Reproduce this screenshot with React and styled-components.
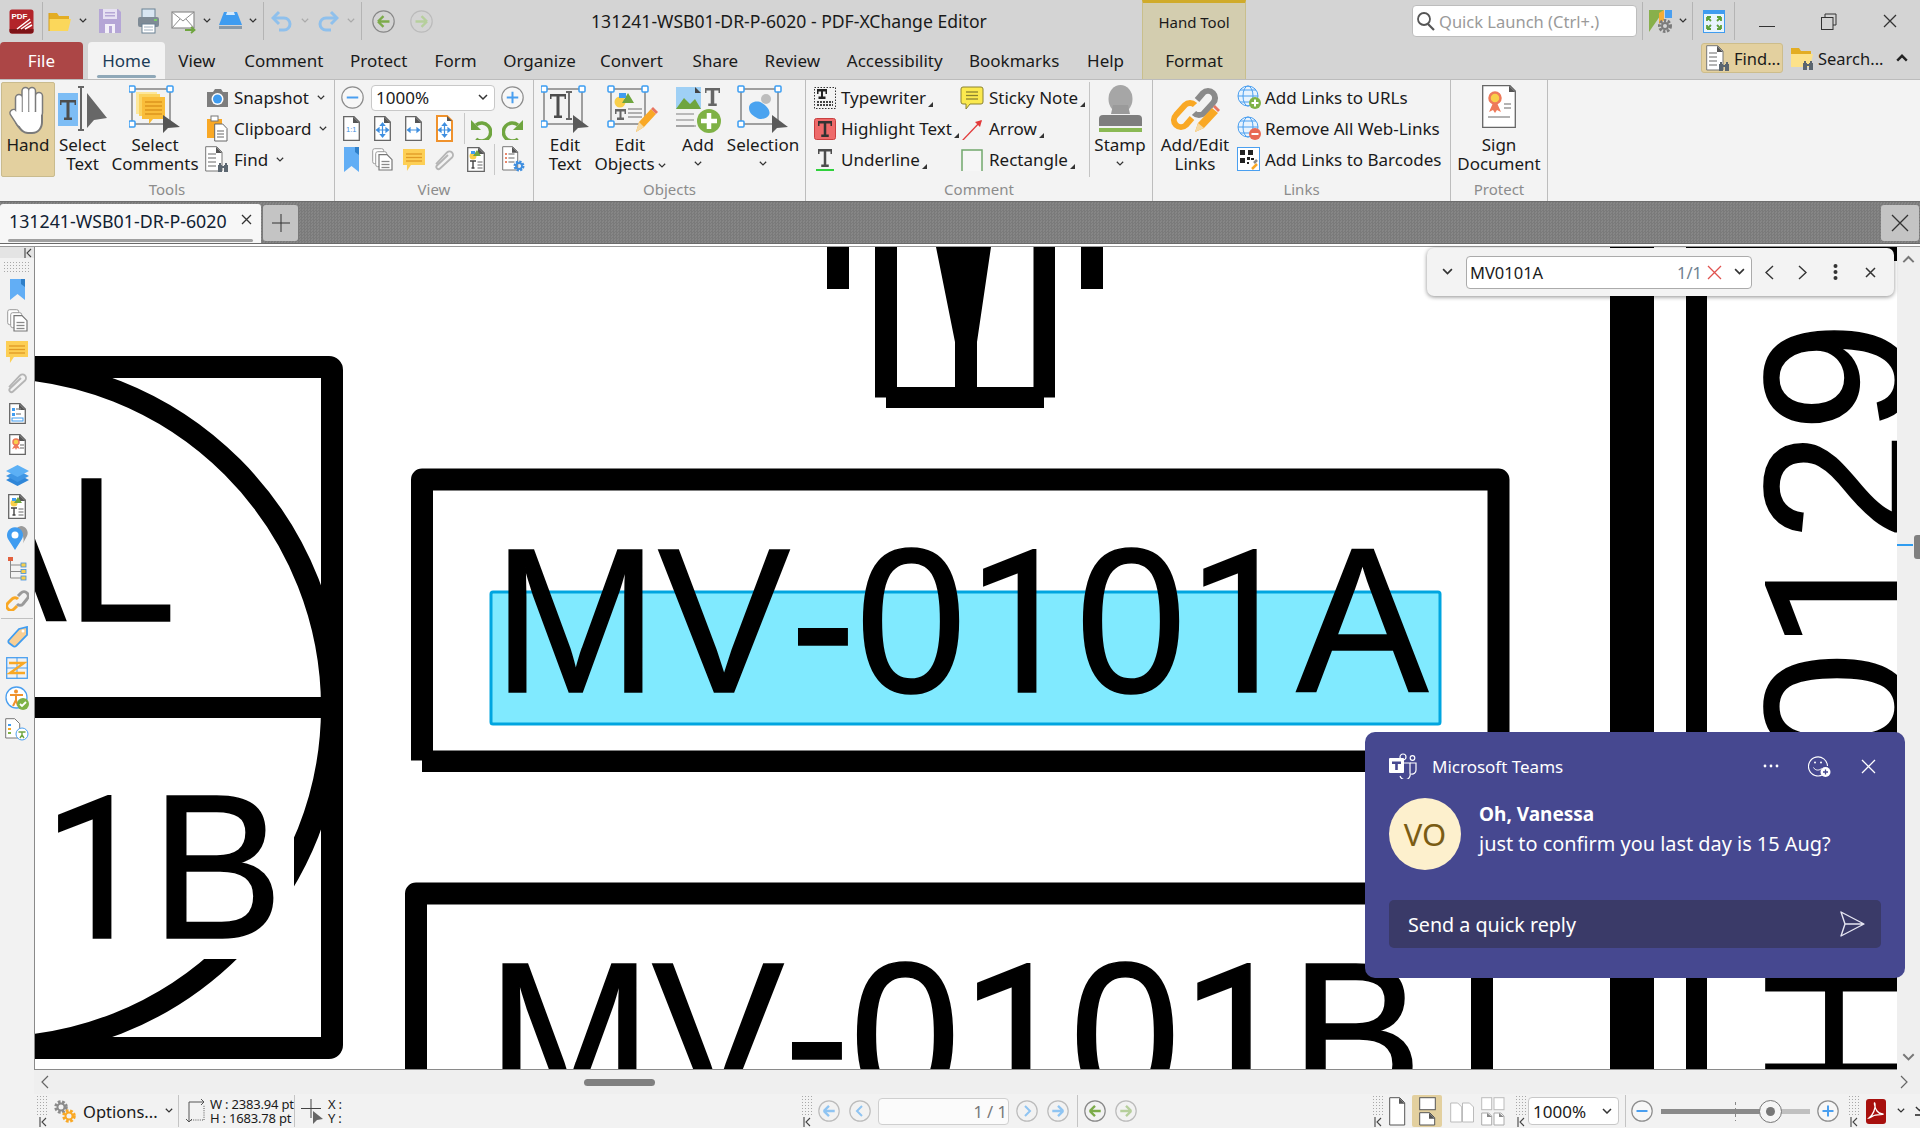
import styled, { createGlobalStyle } from "styled-components";

const GlobalStyle = createGlobalStyle`
  html, body { margin: 0; padding: 0; background: #f2f2f2; }
  * { box-sizing: border-box; }
`;

/* ---------- small drawing helpers ---------- */

const Svg = styled.svg`
  display: block;
  flex: none;
`;

const Ico = ({ w = 24, h = w, children }) => (
  <Svg width={w} height={h} viewBox={`0 0 ${w} ${h}`}>
    {children}
  </Svg>
);

const Chev = ({ s = 9, c = "#333", up, sw = 1.5 }) => (
  <Svg width={s} height={s * 0.65} viewBox="0 0 10 6.5">
    <polyline
      points={up ? "1,5.5 5,1.5 9,5.5" : "1,1 5,5 9,1"}
      fill="none"
      stroke={c}
      strokeWidth={sw}
    />
  </Svg>
);

const Cross = ({ s = 14, c = "#333", sw = 1.3 }) => (
  <Ico w={s}>
    <path d={`M1 1L${s - 1} ${s - 1}M${s - 1} 1L1 ${s - 1}`} stroke={c} strokeWidth={sw} />
  </Ico>
);

const Doc = ({ w = 18, h = 24, children, stroke = "#666" }) => (
  <Ico w={w} h={h}>
    <path d={`M.7.7H${w - 6}L${w - 0.7} 6V${h - 0.7}H.7z`} fill="#fff" stroke={stroke} strokeWidth="1.3" />
    <path d={`M${w - 7} .7L${w - 0.7} 7H${w - 7}z`} fill="#555" />
    {children}
  </Ico>
);

const Lines = ({ x, y, w, n = 3, gap = 4, c = "#8a8a8a" }) => (
  <g stroke={c} strokeWidth="1.3">
    {Array.from({ length: n }).map((_, i) => (
      <line key={i} x1={x} x2={x + w} y1={y + i * gap} y2={y + i * gap} />
    ))}
  </g>
);

const Bino = ({ x, y }) => (
  <g fill="#5b6670">
    <rect x={x} y={y + 2} width="4" height="7" />
    <rect x={x + 6} y={y + 2} width="4" height="7" />
    <rect x={x + 1} y={y} width="2" height="3" />
    <rect x={x + 7} y={y} width="2" height="3" />
    <rect x={x + 3} y={y + 3} width="4" height="2" />
  </g>
);

const Handles = ({ x, y, w, h }) => (
  <g>
    <rect x={x} y={y} width={w} height={h} fill="none" stroke="#8a8a8a" strokeWidth="1.600" />
    {[[x, y], [x + w, y], [x, y + h]].map(([a, b], i) => (
      <rect key={i} x={a - 3} y={b - 3} width="6" height="6" rx="1" fill="#fff" stroke="#3b9df2" strokeWidth="1.500" />
    ))}
  </g>
);

const BigT = ({ x, y, w = 16, h = 20, c = "#4d4d4d", s = 3 }) => (
  <path
    fill={c}
    d={`M${x} ${y}h${w}v5h-1.500v-2.500h-${w / 2 - 1.5 - s / 2}v${h - 5}h2.500v2.500h-${s + 5}v-2.500h2.500v-${h - 5}h-${w / 2 - 1.5 - s / 2}v2.500h-1.500z`}
  />
);

const CircleBtn = ({ s = 23, c = "#aaa", bg = "none", children }) => (
  <Ico w={s}>
    <circle cx={s / 2} cy={s / 2} r={s / 2 - 0.8} fill={bg} stroke={c} strokeWidth="1.2" />
    {children}
  </Ico>
);

const NavArrow = ({ s = 23, dir = "left", c = "#7cab4a", ring = "#888" }) => (
  <CircleBtn s={s} c={ring}>
    <path
      transform={dir === "left" ? "" : `rotate(180 ${s / 2} ${s / 2})`}
      d={`M${s * 0.26} ${s / 2}L${s / 2} ${s * 0.27}M${s * 0.26} ${s / 2}L${s / 2} ${s * 0.73}M${s * 0.28} ${s / 2}H${s * 0.76}`}
      fill="none"
      stroke={c}
      strokeWidth="2.400"
    />
  </CircleBtn>
);

const PlusMinus = ({ plus, s = 23 }) => (
  <CircleBtn s={s} c="#8d8d8d" bg="#f7f7f7">
    <path
      d={`M${s * 0.25} ${s / 2}H${s * 0.75}${plus ? `M${s / 2} ${s * 0.25}V${s * 0.75}` : ""}`}
      stroke="#4a9ff0"
      strokeWidth="2"
    />
  </CircleBtn>
);

const Grip = styled.span`
  display: block;
  flex: none;
  width: ${(p) => p.$w || 13}px;
  height: ${(p) => p.$h || 20}px;
  background-image: radial-gradient(#a8a8a8 0.7px, transparent 0.8px);
  background-size: 3px 3px;
`;

const Collapse = () => (
  <Ico w={8} h={10}>
    <path d="M1 0V10M7 1L3 5L7 9" fill="none" stroke="#444" strokeWidth="1.1" />
  </Ico>
);

/* ---------- icons ---------- */

const AppLogo = () => (
  <Ico w={25}>
    <rect x=".5" y=".5" width="24" height="24" rx="2.500" fill="#b3242a" />
    <path d="M.5 20h24v2a2.500 2.500 0 0 1-2.500 2.500h-19a2.500 2.500 0 0 1-2.500-2.500z" fill="#7d1317" />
    <text x="2.500" y="9.500" fontSize="8" fontWeight="700" fill="#fff" fontFamily="Liberation Sans, sans-serif">PDF</text>
    <path d="M8 20L21 10M12 20L22 13M16 20L23 16" stroke="#fff" strokeWidth="1.500" />
  </Ico>
);

const Folder = () => (
  <Ico w={24} h={22}>
    <path d="M1 3h8l2 3h10v4H1z" fill="#e3ad23" />
    <path d="M1 21V9h22l-3 12z" fill="#fbd75b" />
    <path d="M1 21L1 3" stroke="#d59e1d" />
  </Ico>
);

const Save = ({ w = 22 }) => (
  <Ico w={w} h={26}>
    <path d="M0 1h19l3 3v21H0z" fill="#b5a6d6" />
    <rect x="4" y="1" width="14" height="10" fill="#e7e1f3" />
    <rect x="6" y="4" width="10" height="1.500" fill="#b5a6d6" />
    <rect x="6" y="7" width="10" height="1.500" fill="#b5a6d6" />
    <rect x="6" y="16" width="10" height="9" fill="#f3f0f9" />
    <rect x="10" y="18" width="3" height="7" fill="#b5a6d6" />
  </Ico>
);

const Printer = () => (
  <Ico w={23} h={26}>
    <rect x="5" y="1" width="13" height="9" fill="#d9e6f2" stroke="#6a8194" />
    <rect x="1" y="9" width="21" height="10" rx="2" fill="#7f8b96" />
    <rect x="17" y="11" width="3" height="2" fill="#7bd06a" />
    <rect x="5" y="16" width="13" height="9" fill="#fff" stroke="#6a8194" />
    <path d="M7 19h9M7 22h9" stroke="#9fb0bf" />
  </Ico>
);

const Mail = () => (
  <Ico w={26} h={26}>
    <rect x="1" y="4" width="22" height="16" fill="#fff" stroke="#8e8e8e" strokeWidth="1.200" />
    <path d="M1 4l11 9 11-9M1 20l8-9M23 20l-8-9" fill="none" stroke="#8e8e8e" />
    <path d="M14 22h9M20 19l3.500 3-3.500 3" fill="none" stroke="#6fa53f" strokeWidth="1.800" />
  </Ico>
);

const Scanner = () => (
  <Ico w={25} h={22}>
    <path d="M6 2h13l5 13H1z" fill="#3f9cf0" />
    <path d="M9 2h7l1 3H8z" fill="#d5eafc" />
    <rect x="1" y="16" width="23" height="3" fill="#8a9aa8" />
  </Ico>
);

const UndoIcon = ({ flip, o = 1 }) => (
  <Ico w={21} h={22}>
    <g transform={flip ? "translate(21 0) scale(-1 1)" : ""} opacity={o}>
      <path d="M3 8h10a6 6 0 0 1 0 12H8" fill="none" stroke="#8fc0ec" strokeWidth="3" />
      <path d="M8 2L2 8l6 6" fill="none" stroke="#8fc0ec" strokeWidth="3" />
    </g>
  </Ico>
);

const FolderBino = () => (
  <Ico w={24} h={26}>
    <path d="M1 3h8l2 3h10v5H1z" fill="#e3ad23" />
    <path d="M1 22V9h22l-3 13z" fill="#fde28a" />
    <Bino x={13} y={16} />
  </Ico>
);

const FindDoc = () => (
  <Ico w={24} h={27}>
    <path d="M.7.7h11L17 6v19H.7z" fill="#fff" stroke="#777" />
    <path d="M11 .7L17 7h-6z" fill="#555" />
    <Lines x={3} y={8} w={8} n={4} gap={4} />
    <Bino x={13} y={17} />
  </Ico>
);

const GearBadge = () => (
  <Ico w={25} h={25}>
    <path d="M1 1h15l-6 9-9 13z" fill="#88b04b" />
    <path d="M17 1h7v8h-7z" fill="#4a9ff0" />
    <path d="M11 4l5-3v10l-5 4z" fill="#f6ad35" />
    <circle cx="17" cy="17" r="5.500" fill="none" stroke="#7b7b7b" strokeWidth="3" strokeDasharray="2.500 1.500" />
    <circle cx="17" cy="17" r="3" fill="none" stroke="#7b7b7b" strokeWidth="2" />
  </Ico>
);

const FullScreen = () => (
  <Ico w={22} h={23}>
    <rect x=".5" y=".5" width="21" height="22" fill="#e8f4fd" stroke="#3f9cf0" />
    <rect x="0" y="0" width="22" height="4" fill="#3f9cf0" />
    <path d="M4 7l4 4M4 7h4M4 7v4M18 7l-4 4M18 7h-4M18 7v4M4 19l4-4M4 19h4M4 19v-4M18 19l-4-4M18 19h-4M18 19v-4" stroke="#5fa03a" strokeWidth="1.800" fill="none" />
  </Ico>
);

const HandIcon = () => (
  <Ico w={38} h={50}>
    <g fill="none" strokeLinecap="round" stroke="#7b7b7b" strokeWidth="8.500">
      <path d="M10 28V13M16.500 26V6M23 26V6M30 28V11M4.500 28L11 38" />
    </g>
    <path d="M6 27h28v10c0 6-4 12-11 12h-4c-5 0-9-4-13-11z" fill="#7b7b7b" />
    <g fill="none" strokeLinecap="round" stroke="#fff" strokeWidth="5.500">
      <path d="M10 28V13M16.500 26V6M23 26V6M30 28V11M4.500 28L11 38" />
    </g>
    <path d="M8 27h24v10c0 5-3 10-9 10h-4c-4 0-7-3-10-9z" fill="#fff" />
  </Ico>
);

const SelectText = () => (
  <Ico w={50} h={48}>
    <rect x="0" y="8" width="20" height="33" fill="#7dbdf5" />
    <BigT x={2} y={15} w={16} h={20} />
    <path d="M23 2v43M20 2h6M20 45h6" stroke="#666" strokeWidth="2" />
    <path d="M29 8V43L36 35L49 33z" fill="#676767" />
  </Ico>
);

const SelectComments = () => (
  <Ico w={52} h={48}>
    <Handles x={3} y={4} w={38} h={35} />
    <rect x="7" y="7" width="21" height="22" fill="#fde79a" />
    <rect x="10" y="9" width="21" height="22" fill="#fbd35f" />
    <path d="M13 12h23v22H24l-4 5v-5h-7z" fill="#f9bd3a" />
    <Lines x={16} y={17} w={17} n={4} gap={4} c="#d98f1a" />
    <path d="M34 30V48L39 43L51 42z" fill="#555" />
  </Ico>
);

const Camera = () => (
  <Ico w={23} h={20}>
    <path d="M1 4h6l2-3h6l2 3h5v15H1z" fill="#7d7d7d" />
    <circle cx="11.500" cy="11" r="6" fill="#fff" />
    <circle cx="11.500" cy="11" r="4.500" fill="#3f9cf0" />
  </Ico>
);

const Clipboard = () => (
  <Ico w={22} h={27}>
    <rect x="1" y="4" width="15" height="19" fill="#f9a825" />
    <rect x="5" y="1" width="7" height="5" fill="#fff" stroke="#777" />
    <path d="M8.700 9h8L21 13.500V26H8.700z" fill="#fff" stroke="#666" />
    <Lines x={11} y={16} w={7} n={3} gap={3} />
  </Ico>
);

const Doc11 = () => (
  <Doc w={17} h={25}>
    <text x="3" y="16" fontSize="7.500" fill="#3f8fe0" fontFamily="Liberation Sans, sans-serif">1:1</text>
  </Doc>
);

const Arrows4 = ({ x, y, v = true, h = true }) => (
  <g stroke="#3f8fe0" strokeWidth="1.200" fill="#3f8fe0">
    {h && <path d={`M${x - 6} ${y}h12M${x - 6} ${y}l2.500-2v4zM${x + 6} ${y}l-2.500-2v4z`} />}
    {v && <path d={`M${x} ${y - 7}v14M${x} ${y - 7}l-2 2.500h4zM${x} ${y + 7}l-2-2.500h4z`} />}
  </g>
);

const DocFit = () => (
  <Doc w={17} h={25}>
    <Arrows4 x={8.500} y={14} />
  </Doc>
);

const DocWidth = () => (
  <Doc w={17} h={25}>
    <Arrows4 x={8.500} y={14} v={false} />
  </Doc>
);

const DocVisible = () => (
  <Ico w={17} h={27}>
    <path d="M1 1h10l5 5v20H1z" fill="#fff" stroke="#f0922c" strokeWidth="2" />
    <path d="M11 1l5 5h-5z" fill="#555" />
    <Arrows4 x={8.500} y={15} />
  </Ico>
);

const Rotate = ({ flip }) => (
  <Ico w={22}>
    <g transform={flip ? "translate(22 0) scale(-1 1)" : ""}>
      <path d="M6 21A9 9 0 1 0 6 7" fill="none" stroke="#6fa53f" strokeWidth="3.500" />
      <path d="M1 2v10h10z" fill="#6fa53f" />
    </g>
  </Ico>
);

const Bookmark = ({ w = 15, h = 25 }) => (
  <Ico w={w} h={h}>
    <path d={`M0 0H${w}V${h}L${w / 2} ${h - 6}L0 ${h}z`} fill="#62aef5" />
    <path d={`M${w - 4} 0H${w}V8L${w - 4} 5z`} fill="#2f7fc8" />
  </Ico>
);

const Pages = () => (
  <Ico w={21} h={23}>
    <rect x=".7" y=".7" width="11" height="15" rx="2" fill="#fff" stroke="#9a9a9a" />
    <rect x="3.700" y="3.700" width="11" height="15" rx="2" fill="#fff" stroke="#9a9a9a" />
    <path d="M7 6.700h8l5 5V22H7z" fill="#fff" stroke="#777" strokeWidth="1.200" />
    <Lines x={9.500} y={13.500} w={8} n={3} gap={3} />
  </Ico>
);

const Note = ({ w = 22, h = 22 }) => (
  <Ico w={w} h={h}>
    <path d={`M0 0H${w}V${h - 6}H${w * 0.36}L${w * 0.18} ${h}V${h - 6}H0z`} fill="#fdcf55" />
    <Lines x={3} y={5} w={w - 6} n={3} gap={3.500} c="#e09a25" />
  </Ico>
);

const Clip = () => (
  <Ico w={23}>
    <path d="M4 16L15 4.500a3.500 3.500 0 0 1 5 5L8 20.500a2 2 0 0 1-3-3L16 7" fill="none" stroke="#b5b5b5" strokeWidth="1.800" transform="translate(-1 0)" />
  </Ico>
);

const DocShapes = () => (
  <Doc w={18} h={25}>
    <circle cx="6" cy="9" r="3.500" fill="#f9cf4a" />
    <path d="M6 9l4-6 4 6z" fill="#6fa53f" />
    <rect x="4" y="4" width="4" height="3" fill="#3f9cf0" />
    <path d="M3 14h6M6 14v7M4.500 21h3" stroke="#444" strokeWidth="1.400" />
    <Lines x={10.500} y={15} w={5} n={3} gap={3} />
  </Doc>
);

const DocListGear = () => (
  <Ico w={24} h={27}>
    <path d="M.7.7h10l5 5V24H.7z" fill="#fff" stroke="#777" />
    <path d="M10 .7l6 6h-6z" fill="#555" />
    <path d="M3 8h2M3 12h2M3 16h2" stroke="#e2603d" strokeWidth="1.500" />
    <Lines x={6.500} y={8} w={6} n={3} gap={4} />
    <circle cx="17" cy="20" r="4" fill="none" stroke="#3f8fe0" strokeWidth="3" strokeDasharray="2 1.100" />
    <circle cx="17" cy="20" r="3" fill="none" stroke="#3f8fe0" strokeWidth="1.800" />
  </Ico>
);

const EditText = () => (
  <Ico w={48} h={48}>
    <Handles x={3} y={4} w={38} h={35} />
    <BigT x={9} y={9} w={16} h={24} s={3} />
    <path d="M28 7v27M25 7h6M25 34h6" stroke="#666" strokeWidth="1.800" />
    <path d="M32 30V48L37 43L48 42z" fill="#5a5a5a" />
  </Ico>
);

const EditObjects = () => (
  <Ico w={56} h={48}>
    <Handles x={9} y={4} w={34} h={35} />
    <circle cx="18" cy="17" r="5.500" fill="#f9cf4a" />
    <path d="M20 18l6-10 6 10z" fill="#6fa53f" />
    <rect x="17" y="8" width="7" height="5" fill="#3f9cf0" />
    <BigT x={13} y={24} w={11} h={11} c="#666" s={2} />
    <Lines x={26} y={24} w={14} n={3} gap={4} />
    <path d="M34 47l3-10 12-13 5 5-12 13z" fill="#f9a825" />
    <path d="M34 47l3-10 5 5z" fill="#f6d9a0" />
    <path d="M49 24l2-2 5 5-2 2z" fill="#e87461" />
  </Ico>
);

const AddIcon = () => (
  <Ico w={48} h={48}>
    <rect x="2" y="2" width="25" height="22" fill="#9fd0f5" />
    <path d="M2 24l8-11 6 6 5-5 6 10z" fill="#6fa53f" />
    <path d="M21 2l6 6h-6z" fill="#444" />
    <BigT x={31} y={3} w={15} h={18} c="#666" s={3.500} />
    <Lines x={2} y={29} w={18} n={3} gap={6} c="#999" />
    <path d="M2 41h20" stroke="#999" strokeWidth="1.300" />
    <circle cx="35" cy="36" r="12" fill="#7fb246" />
    <path d="M35 28v16M27 36h16" stroke="#fff" strokeWidth="4.500" />
  </Ico>
);

const SelectionIcon = () => (
  <Ico w={52} h={48}>
    <Handles x={4} y={4} w={37} h={35} />
    <path d="M12 23c0-6 8-8 13-5s9 8 7 12-9 5-12 3-8-4-8-10z" fill="#4aa3f0" />
    <circle cx="29" cy="14" r="5" fill="#bdbdbd" />
    <path d="M35 30V48L40 43L51 42z" fill="#5a5a5a" />
  </Ico>
);

const Typewriter = () => (
  <Ico w={22} h={24}>
    <rect x=".5" y="1.500" width="21" height="21" fill="none" stroke="#333" strokeDasharray="1.500 1.500" />
    <BigT x={3} y={3} w={10} h={10} c="#222" s={2} />
    <path d="M3 16h16M3 19h16" stroke="#444" strokeWidth="2" strokeDasharray="2 1" />
  </Ico>
);

const HighlightT = () => (
  <Ico w={22} h={22}>
    <rect x=".5" y=".5" width="21" height="21" rx="2" fill="#ee6a6a" stroke="#c94040" />
    <BigT x={4} y={3} w={14} h={16} c="#333" s={2.500} />
  </Ico>
);

const UnderlineT = () => (
  <Ico w={20} h={24}>
    <BigT x={3} y={1} w={14} h={18} c="#4d4d4d" s={2.500} />
    <rect x="1" y="21" width="18" height="2" fill="#2fd13c" />
  </Ico>
);

const Sticky = () => (
  <Ico w={24}>
    <path d="M3 1h18a2 2 0 0 1 2 2v13a2 2 0 0 1-2 2H10l-4 5v-5H3a2 2 0 0 1-2-2V3a2 2 0 0 1 2-2z" fill="#fbe94e" stroke="#8a8230" />
    <Lines x={6} y={6} w={12} n={3} gap={3.500} c="#8a8230" />
  </Ico>
);

const RedArrow = () => (
  <Ico w={22}>
    <path d="M1 23L20 3" stroke="#e23b3b" strokeWidth="1.300" />
    <path d="M21 2l-7 2 5 5z" fill="#e23b3b" />
  </Ico>
);

const GreenRect = () => (
  <Ico w={22}>
    <rect x="1" y="1" width="20" height="22" fill="#f6f6f6" stroke="#71a86c" strokeWidth="1.500" />
  </Ico>
);

const StampIcon = () => (
  <Ico w={45} h={48}>
    <ellipse cx="22.500" cy="14" rx="12" ry="14" fill="#a6a6a6" />
    <path d="M15 20h15l2 9H13z" fill="#9a9a9a" />
    <path d="M5 30h35a4 4 0 0 1 4 4v7H1v-7a4 4 0 0 1 4-4z" fill="#7e7e7e" />
    <rect x="1" y="43" width="43" height="4" fill="#8ab954" />
  </Ico>
);

const LinkPencil = () => (
  <Ico w={52} h={48}>
    <path d="M28 15l6-7a7 7 0 0 1 10 10l-9 10a7 7 0 0 1-10 0" fill="none" stroke="#8a8a8a" strokeWidth="6" />
    <path d="M26 20a7 7 0 0 0-10 0l-9 10a7 7 0 0 0 10 10l6-7" fill="none" stroke="#f9a825" strokeWidth="6" />
    <path d="M26 47l3-9 14-15 6 5-14 15z" fill="#f9a825" />
    <path d="M26 47l3-9 6 5z" fill="#f6d9a0" />
    <path d="M44 22l2-2 5 5-2 2z" fill="#e87461" />
  </Ico>
);

const Globe = ({ badge }) => (
  <Ico w={25}>
    <circle cx="11" cy="11" r="10" fill="#e8f3fd" stroke="#4a9ff0" />
    <ellipse cx="11" cy="11" rx="5" ry="10" fill="none" stroke="#4a9ff0" />
    <path d="M1 11h20M3 5h16M3 17h16" stroke="#4a9ff0" />
    <circle cx="18" cy="18" r="6" fill={badge === "plus" ? "#7fb246" : "#e86a55"} />
    <path d={badge === "plus" ? "M14.500 18h7M18 14.500v7" : "M14.500 18h7"} stroke="#fff" strokeWidth="2" />
  </Ico>
);

const QrLink = () => (
  <Ico w={24} h={25}>
    <rect x=".5" y=".5" width="22" height="23" fill="#fff" stroke="#4a9ff0" />
    <path d="M3 3h5v5H3zM11 3h5v5h-5zM3 11h5v5H3zM10 10h3v3h-3zM14 11h3v2h-3zM10 15h2v2h-2z" fill="#222" />
    <path d="M15 22l5-5" stroke="#f9a825" strokeWidth="2.500" />
    <path d="M17 16l3-3" stroke="#8a8a8a" strokeWidth="2.500" />
  </Ico>
);

const SignDoc = () => (
  <Doc w={34} h={43} stroke="#666">
    <circle cx="13" cy="13" r="5.500" fill="#f9cf4a" stroke="#ee7a5a" strokeWidth="2.500" />
    <path d="M7 27l4-9h4l4 9-4-2-2 3-2-3z" fill="#ee7a5a" />
    <Lines x={22} y={19} w={7} n={2} gap={4} />
    <Lines x={6} y={32} w={22} n={1} gap={4} />
  </Doc>
);

const DocList = () => (
  <Doc w={17} h={21}>
    <path d="M3 5h3v3H3zM3 10h3v3H3z" fill="#3f9cf0" />
    <Lines x={7} y={6} w={5} n={2} gap={5} />
    <rect x="3" y="15" width="11" height="3" fill="none" stroke="#3f9cf0" />
  </Doc>
);

const DocSeal = () => (
  <Doc w={17} h={21}>
    <circle cx="7" cy="8" r="3" fill="#f9cf4a" stroke="#ee7a5a" strokeWidth="1.500" />
    <path d="M3 15l3-5h2l3 5-3-1-1 2-1-2z" fill="#ee7a5a" />
    <Lines x={11} y={11} w={4} n={2} gap={3} />
  </Doc>
);

const Layers = () => (
  <Ico w={23} h={22}>
    <path d="M11.500 9L23 15l-11.500 6L0 15z" fill="#2f86d8" />
    <path d="M11.500 5L23 11l-11.500 6L0 11z" fill="#3f96e4" />
    <path d="M11.500 0L23 6l-11.500 6L0 6z" fill="#5cb0f5" />
  </Ico>
);

const Pins = () => (
  <Ico w={22} h={24}>
    <path d="M15 0a7 7 0 0 1 6 10l-5 9c4-6 0-14-6-16a7 7 0 0 1 5-3z" fill="#9a9a9a" />
    <path d="M9 24L2 13a8 8 0 1 1 14 0z" fill="#3f9cf0" />
    <circle cx="9" cy="9" r="3.500" fill="#fff" />
  </Ico>
);

const Tree = () => (
  <Ico w={20} h={24}>
    <rect x="1" y="0" width="5" height="4" fill="#e2603d" />
    <path d="M3.500 4V21M3.500 8H14M3.500 14.500H14M3.500 21H14" stroke="#888" />
    <rect x="14" y="6" width="5" height="4" fill="#f9cf4a" stroke="#3f8fe0" strokeWidth=".8" />
    <rect x="14" y="12.500" width="5" height="4" fill="#f9cf4a" stroke="#3f8fe0" strokeWidth=".8" />
    <rect x="14" y="19" width="5" height="4" fill="#f9cf4a" stroke="#3f8fe0" strokeWidth=".8" />
  </Ico>
);

const LinkSmall = () => (
  <Ico w={23}>
    <path d="M12 8l3-3a4 4 0 0 1 6 6l-4 5a4 4 0 0 1-6 0" fill="none" stroke="#9a9a9a" strokeWidth="3" />
    <path d="M12 11a4 4 0 0 0-6 0l-4 4a4 4 0 0 0 6 6l3-3" fill="none" stroke="#f9a825" strokeWidth="3" />
  </Ico>
);

const Tag = () => (
  <Ico w={21} h={22}>
    <path d="M2 14L12 3l8-2v8L9 20a2 2 0 0 1-3 0l-4-3a2 2 0 0 1 0-3z" fill="#f8cf95" stroke="#3f9cf0" strokeWidth="1.800" />
    <circle cx="16" cy="5" r="1.500" fill="#fff" />
  </Ico>
);

const Zigzag = () => (
  <Ico w={22}>
    <rect x=".7" y=".7" width="20.600" height="20.600" fill="none" stroke="#4a9ff0" strokeWidth="1.300" />
    <path d="M0 11h22M11 0v22" stroke="#4a9ff0" />
    <path d="M3 6h15L4 16h15" fill="none" stroke="#f9a825" strokeWidth="2.400" />
  </Ico>
);

const Access = () => (
  <Ico w={25}>
    <circle cx="11.500" cy="11.500" r="10.500" fill="#fff" stroke="#4a9ff0" strokeWidth="1.300" />
    <circle cx="11" cy="5.500" r="2" fill="#f0922c" />
    <path d="M5 9h13M11 9v5l-3 6M11 14l2 6" fill="none" stroke="#f0922c" strokeWidth="2" />
    <circle cx="18" cy="18" r="6" fill="#7fb246" />
    <path d="M15 18l2 2 4-4" fill="none" stroke="#fff" strokeWidth="1.800" />
  </Ico>
);

const ListAccess = () => (
  <Ico w={24} h={23}>
    <path d="M.7.7h9l5 5V20H.7z" fill="#fff" stroke="#777" />
    <path d="M3 6h3v2H3z" fill="#3f9cf0" />
    <path d="M3 10h3v2H3z" fill="#f9a825" />
    <path d="M3 14h3v2H3z" fill="#7fb246" />
    <circle cx="17" cy="16" r="6" fill="#fff" stroke="#4a9ff0" />
    <path d="M13.500 14h7M17 14v3l-2 3M17 17l2 3" fill="none" stroke="#6fa53f" strokeWidth="1.400" />
  </Ico>
);

const GearOrange = () => (
  <Ico w={24} h={24}>
    <circle cx="8" cy="8" r="5" fill="none" stroke="#8a8a8a" strokeWidth="3.500" strokeDasharray="2.500 1.500" />
    <circle cx="8" cy="8" r="3.500" fill="none" stroke="#8a8a8a" strokeWidth="2" />
    <circle cx="16" cy="17" r="5" fill="none" stroke="#f9a825" strokeWidth="3.500" strokeDasharray="2.500 1.500" />
    <circle cx="16" cy="17" r="3.500" fill="none" stroke="#f9a825" strokeWidth="2" />
  </Ico>
);

const SizeIcon = () => (
  <Ico w={20} h={25}>
    <path d="M3 3h15M15 0l3 3-3 3M3 3v20M0 20l3 3 3-3" fill="none" stroke="#555" />
    <path d="M5 21h13M18 21V6" stroke="#555" strokeDasharray="1 1.200" />
  </Ico>
);

const CrossPointer = () => (
  <Ico w={22} h={26}>
    <path d="M10 1v19M0 10.500h20" stroke="#444" />
    <path d="M12 13V26L16 22L22 21z" fill="#666" />
  </Ico>
);

const SinglePage = () => (
  <Ico w={17} h={29}>
    <path d="M.7.7h10l5 5V28H.7z" fill="#fff" stroke="#555" />
    <path d="M10 .7l6 6h-6z" fill="#555" />
  </Ico>
);

const ContinuousPage = () => (
  <Ico w={17} h={29}>
    <rect x=".7" y=".7" width="15.600" height="12" fill="#fff" stroke="#555" />
    <path d="M.7 15.700h10l5 5V28H.7z" fill="#fff" stroke="#555" />
    <path d="M10 15.700l6 6h-6z" fill="#555" />
  </Ico>
);

const FacingPages = () => (
  <Ico w={24} h={23}>
    <path d="M.7 3h7l4 4v15H.7zM12.500 3h7l4 4v15h-11z" fill="#fff" stroke="#bbb" />
  </Ico>
);

const CoverPages = () => (
  <Ico w={24} h={29}>
    <rect x=".7" y=".7" width="10" height="12" fill="#fff" stroke="#bbb" />
    <rect x="13" y=".7" width="10" height="12" fill="#fff" stroke="#bbb" />
    <path d="M.7 16h7l3 3v9h-10zM13 16h7l3 3v9H13z" fill="#fff" stroke="#aaa" />
    <path d="M6 16l5 4H6zM18 16l5 4h-5z" fill="#888" />
  </Ico>
);

const AcrobatBadge = () => (
  <Ico w={20} h={25}>
    <rect x="0" y="0" width="20" height="25" rx="3" fill="#a8100e" />
    <path d="M3 19c4-3 7-10 6-14s-1 3 2 7 5 2 6 3-7 0-10 2-4 2-4 2z" fill="none" stroke="#fff" strokeWidth="1.300" />
  </Ico>
);

const TeamsLogo = () => (
  <Ico w={28} h={26}>
    <rect x="0" y="5" width="15" height="15" rx="1" fill="#fff" />
    <path d="M3 8.500h9v2.400H8.800V17H6.200v-6.100H3z" fill="#464890" />
    <circle cx="14" cy="4" r="3" fill="none" stroke="#fff" strokeWidth="1.200" />
    <circle cx="23.500" cy="5" r="2.300" fill="none" stroke="#fff" strokeWidth="1.200" />
    <path d="M15 10h6v10a5 5 0 0 1-10 3" fill="none" stroke="#fff" strokeWidth="1.200" />
    <path d="M21 10h6v7a4 4 0 0 1-5 4" fill="none" stroke="#fff" strokeWidth="1.200" />
  </Ico>
);

const EmojiPlus = () => (
  <Ico w={24} h={24}>
    <path d="M15 20.500A9.500 9.500 0 1 1 19.500 12" fill="none" stroke="#fff" strokeWidth="1.100" />
    <circle cx="7" cy="8.500" r="1" fill="#fff" />
    <circle cx="13" cy="8.500" r="1" fill="#fff" />
    <path d="M5.500 13.500c2 3.500 6 3 8 1" fill="none" stroke="#fff" />
    <circle cx="17.500" cy="18" r="5" fill="#fff" />
    <path d="M15 18h5M17.500 15.500v5" stroke="#464890" strokeWidth="1.300" />
  </Ico>
);

const SendIcon = () => (
  <Ico w={25} h={26}>
    <path d="M1 1L24 13L1 25L5 13zM5 13H24" fill="none" stroke="#e6e6f2" strokeWidth="1.400" strokeLinejoin="round" />
  </Ico>
);

/* ---------- page layout ---------- */

const Root = styled.div`
  position: relative;
  width: 1920px;
  height: 1128px;
  overflow: hidden;
  display: flex;
  flex-direction: column;
  background: #f2f2f2;
  color: #1a1a1a;
  font-family: "Noto Sans", "Open Sans", sans-serif;
  font-size: 17px;
`;

const Header = styled.header`
  display: grid;
  grid-template-columns: 1142px 104px 1fr;
  grid-template-rows: 42px 37px;
  background: #d4d4d4;
`;

const TitleRow = styled.div`
  display: flex;
  align-items: center;
  padding-left: 9px;
`;

const Spot = styled.span`
  display: inline-flex;
  flex: none;
  margin-left: ${(p) => p.$ml || 0}px;
`;

const QatSep = styled.span`
  flex: none;
  width: 1px;
  height: 38px;
  background: #b4b4b4;
  margin-left: ${(p) => p.$ml || 0}px;
`;

const WindowTitle = styled.div`
  margin-left: 158px;
  white-space: nowrap;
  font-size: 17.600px;
`;

const ContextTab = styled.div`
  grid-column: 2;
  grid-row: 1 / span 2;
  display: flex;
  flex-direction: column;
  align-items: center;
  background: #d3cdaf;
  border-top: 3px solid #d0ab2a;
  border-left: 1px solid #c9bf8c;
  border-right: 1px solid #c9bf8c;
`;

const ContextName = styled.div`
  height: 39px;
  line-height: 39px;
  font-size: 15px;
`;

const ContextLabel = styled.div`
  height: 37px;
  line-height: 38px;
`;

const QuickRow = styled.div`
  display: flex;
  align-items: center;
  padding-left: 166px;
`;

const QuickLaunch = styled.div`
  display: flex;
  align-items: center;
  gap: 3px;
  width: 225px;
  height: 32px;
  padding-left: 3px;
  background: #fff;
  border: 1px solid #bdbdbd;
  border-radius: 4px;
  color: #9a9a9a;
  font-size: 16.500px;
`;

const Minimize = styled.span`
  display: block;
  width: 16px;
  height: 1.500px;
  margin: 11px 0 0 24px;
  background: #333;
`;

const TabsRow = styled.nav`
  display: flex;
  align-items: flex-end;
`;

const FileTab = styled.div`
  width: 83px;
  height: 37px;
  margin-right: 5px;
  text-align: center;
  line-height: 38px;
  color: #fff;
  background: #ac4646;
  border-radius: 4px 4px 0 0;
`;

const MenuTab = styled.div`
  position: relative;
  width: ${(p) => p.$w}px;
  height: 37px;
  text-align: center;
  line-height: 38px;
  white-space: nowrap;
  border-radius: 4px 4px 0 0;
  background: ${(p) => (p.$on ? "#f3f3f3" : "transparent")};
  color: ${(p) => (p.$on ? "#1d3c57" : "inherit")};
  &::after {
    content: ${(p) => (p.$on ? '""' : "none")};
    position: absolute;
    left: 9px;
    right: 9px;
    bottom: 1px;
    height: 3px;
    border-radius: 2px;
    background: #8fa8b8;
  }
`;

const FindRow = styled.div`
  display: flex;
  align-items: center;
  padding: 0 0 5px 455px;
  font-size: 16.500px;
`;

const FindBtn = styled.div`
  display: flex;
  align-items: center;
  gap: 4px;
  width: ${(p) => p.$w}px;
  height: 30px;
  padding-left: 4px;
  margin-right: ${(p) => p.$mr || 0}px;
  background: ${(p) => (p.$on ? "#e3d09f" : "transparent")};
  border: 1px solid ${(p) => (p.$on ? "#cdbd8b" : "transparent")};
  border-radius: 3px;
  white-space: nowrap;
`;

/* ribbon */

const Ribbon = styled.section`
  display: flex;
  height: 123px;
  background: #f3f3f3;
  border-top: 1px solid #bcbcbc;
  border-bottom: 1px solid #6e6e6e;
`;

const Group = styled.div`
  display: flex;
  flex-direction: column;
  flex: none;
  width: ${(p) => p.$w}px;
  border-right: 1px solid #bdbdbd;
`;

const GroupBody = styled.div`
  flex: none;
  display: flex;
  height: 97px;
  padding: 2px 0 0 ${(p) => p.$pl || 0}px;
`;

const GroupLabel = styled.div`
  height: 24px;
  padding-top: 1px;
  text-align: center;
  font-size: 15px;
  line-height: 23px;
  color: #8c8c8c;
`;

const BigBtn = styled.div`
  display: flex;
  flex-direction: column;
  align-items: center;
  flex: none;
  width: ${(p) => p.$w}px;
  height: 95px;
  padding-top: 2px;
  font-size: 17px;
  line-height: 19px;
  text-align: center;
  white-space: nowrap;
  background: ${(p) => (p.$on ? "#e3d09f" : "transparent")};
  border: 1px solid ${(p) => (p.$on ? "#c9bb8e" : "transparent")};
  border-radius: 2px;
`;

const BigIcon = styled.div`
  display: flex;
  justify-content: center;
  align-items: flex-start;
  flex: none;
  height: 50px;
  width: 100%;
`;

const BigLabel = styled.div`
  flex: none;
`;

const BigChev = styled.div`
  display: flex;
  justify-content: center;
  height: 19px;
  align-items: center;
`;

const InlineChev = styled.span`
  display: inline-block;
  margin-left: 3px;
  vertical-align: middle;
`;

const SmallCol = styled.div`
  display: flex;
  flex-direction: column;
  flex: none;
  width: ${(p) => p.$w}px;
  margin-left: ${(p) => p.$ml || 0}px;
`;

const SmallBtn = styled.div`
  display: flex;
  align-items: center;
  height: 31px;
  white-space: nowrap;
  font-size: 17px;
`;

const SmallIcon = styled.span`
  display: flex;
  justify-content: center;
  align-items: center;
  flex: none;
  width: ${(p) => p.$w || 24}px;
  margin-right: ${(p) => p.$gap || 5}px;
`;

const SideChev = styled.span`
  margin-left: 8px;
  display: inline-flex;
`;

const Tri = styled.span`
  align-self: flex-end;
  margin: 0 0 6px 2px;
  width: 0;
  height: 0;
  border-left: 5px solid transparent;
  border-bottom: 5px solid #333;
`;

const RibbonSep = styled.div`
  flex: none;
  width: 1px;
  height: 95px;
  background: #c4c4c4;
`;

const ViewRows = styled.div`
  display: flex;
  flex-direction: column;
  padding-left: 1px;
`;

const ViewRow = styled.div`
  display: flex;
  align-items: center;
  height: 31px;
  padding-left: ${(p) => p.$pl || 0}px;
`;

const ViewCell = styled.span`
  display: flex;
  justify-content: center;
  align-items: center;
  flex: none;
  width: ${(p) => p.$w || 31}px;
`;

const ViewSep = styled.span`
  flex: none;
  width: 1px;
  height: 31px;
  margin-left: ${(p) => p.$ml || 0}px;
  background: #c8c8c8;
`;

const ZoomCombo = styled.div`
  display: flex;
  align-items: center;
  justify-content: space-between;
  flex: none;
  width: ${(p) => p.$w}px;
  height: ${(p) => p.$h || 26}px;
  margin: 0 ${(p) => p.$mr || 0}px 0 ${(p) => p.$ml || 0}px;
  padding: 0 6px 0 4px;
  background: #fff;
  border: 1px solid #c8c8c8;
  border-radius: 4px;
  font-size: 17px;
`;

/* tab strip */

const TabStrip = styled.div`
  display: flex;
  align-items: flex-end;
  height: 41px;
  background: repeating-conic-gradient(#7a7a7a 0 25%, #868686 0 50%) 0 0 / 3px 3px;
`;

const DocTab = styled.div`
  position: relative;
  width: 261px;
  height: 39px;
  padding: 5px 0 0 9px;
  background: #f7f7f7;
  border-radius: 3px 3px 0 0;
  font-size: 17.800px;
  color: #123;
  &::after {
    content: "";
    position: absolute;
    left: 8px;
    right: 8px;
    bottom: 1px;
    height: 3px;
    background: #a0a0a0;
    border-radius: 2px;
  }
`;

const DocTabClose = styled.span`
  position: absolute;
  top: 10px;
  right: 9px;
  display: block;
`;

const StripBtn = styled.div`
  display: flex;
  align-items: center;
  justify-content: center;
  width: ${(p) => p.$w}px;
  height: 36px;
  margin: 0 ${(p) => p.$mr || 0}px 2px ${(p) => p.$ml || 0}px;
  background: #c4c4c4;
  border-radius: 3px;
`;

const Spacer = styled.span`
  flex: 1;
`;

const StripShade = styled.div`
  height: 4px;
  background: #fff;
  border-top: 1px solid #6a6a6a;
  border-bottom: 1px solid #999;
`;

/* workspace */

const Workspace = styled.main`
  flex: 1;
  display: flex;
  min-height: 0;
`;

const SideBar = styled.aside`
  display: flex;
  flex-direction: column;
  align-items: center;
  flex: none;
  width: 34px;
  background: #f2f2f2;
`;

const SideTop = styled.div`
  display: flex;
  justify-content: flex-end;
  align-items: center;
  width: 100%;
  height: 11px;
  padding-right: 2px;
  background: #e4e4e4;
`;

const SideGrip = styled(Grip)`
  margin: 3px 0 0;
`;

const SideItem = styled.div`
  display: flex;
  align-items: center;
  justify-content: center;
  height: 31px;
`;

const SideSep = styled.div`
  width: 32px;
  height: 1px;
  margin: 3px 0 2px;
  background: #c0c0c0;
`;

const CenterCol = styled.div`
  flex: 1;
  display: flex;
  flex-direction: column;
  min-width: 0;
`;

const ViewerRow = styled.div`
  display: flex;
  height: 823px;
`;

const PageCanvas = styled.div`
  flex: 1;
  background: #fff;
  overflow: hidden;
  border-left: 1px solid #8a8a8a;
  border-bottom: 1px solid #8a8a8a;
`;

const VScroll = styled.div`
  position: relative;
  display: flex;
  flex-direction: column;
  align-items: center;
  justify-content: space-between;
  flex: none;
  width: 23px;
  padding: 8px 0 9px;
  background: #efefef;
`;

const VThumb = styled.span`
  position: absolute;
  top: 288px;
  right: 0;
  width: 6px;
  height: 24px;
  background: #808080;
  border-radius: 3px 0 0 3px;
`;

const VMark = styled.span`
  position: absolute;
  top: 297px;
  left: 0;
  width: 16px;
  height: 1.500px;
  background: #2f9cf0;
`;

const HScroll = styled.div`
  display: flex;
  align-items: center;
  height: 24px;
  padding: 0 12px 0 7px;
  background: #efefef;
`;

const HThumbTrack = styled.div`
  flex: 1;
  display: flex;
  padding-left: 535px;
`;

const HThumb = styled.span`
  display: block;
  width: 71px;
  height: 7px;
  background: #808080;
  border-radius: 4px;
`;

const StatusBar = styled.footer`
  display: flex;
  align-items: center;
  height: 34px;
  padding-left: 2px;
  background: #f2f2f2;
`;

const GripCol = styled.div`
  display: flex;
  flex-direction: column;
  align-items: center;
  justify-content: space-between;
  flex: none;
  width: 13px;
  height: 32px;
  margin-left: ${(p) => p.$ml || 0}px;
`;

const StatusSep = styled.span`
  flex: none;
  width: 1px;
  height: 32px;
  margin-left: ${(p) => p.$ml || 0}px;
  background: #c4c4c4;
`;

const Options = styled.span`
  flex: none;
  margin-left: 6px;
  width: 82px;
  white-space: nowrap;
  font-size: 16.500px;
`;

const Metric = styled.div`
  flex: none;
  width: ${(p) => p.$w}px;
  margin-left: ${(p) => p.$ml}px;
  font-size: 13px;
  line-height: 14px;
  white-space: pre;
  letter-spacing: -0.200px;
`;

const PageInput = styled.div`
  display: flex;
  align-items: center;
  justify-content: flex-end;
  flex: none;
  width: 131px;
  height: 27px;
  margin-left: 7px;
  padding-right: 1px;
  background: #fbfbfb;
  border: 1px solid #cfcfcf;
  border-radius: 4px;
  color: #777;
  font-size: 16.500px;
`;

const LayoutBtn = styled.span`
  display: flex;
  align-items: center;
  justify-content: center;
  flex: none;
  width: 30px;
  height: 32px;
  margin-left: ${(p) => p.$ml || 0}px;
  background: ${(p) => (p.$on ? "#e3d09f" : "transparent")};
  border-radius: 2px;
`;

const SliderTrack = styled.div`
  position: relative;
  flex: none;
  width: 149px;
  height: 5px;
  margin-left: 8px;
  background: #c0c0c0;
`;

const SliderFill = styled.span`
  display: block;
  width: 105px;
  height: 5px;
  background: #8a8a8a;
`;

const SliderTick = styled.span`
  position: absolute;
  left: 74px;
  top: -7px;
  width: 1px;
  height: 19px;
  background: repeating-linear-gradient(#888 0 3px, transparent 3px 6px);
`;

const SliderKnob = styled.span`
  position: absolute;
  left: 98px;
  top: -9px;
  display: flex;
  align-items: center;
  justify-content: center;
  width: 23px;
  height: 23px;
  background: #f5f5f5;
  border: 1px solid #777;
  border-radius: 50%;
  &::after {
    content: "";
    width: 9px;
    height: 9px;
    border-radius: 50%;
    background: #777;
  }
`;

const EdgeMark = styled.span`
  display: flex;
  flex-direction: column;
  align-items: center;
  gap: 2px;
  margin-left: ${(p) => p.$ml}px;
  &::after {
    content: "";
    width: 9px;
    height: 1.500px;
    background: #555;
  }
`;

/* floating parts */

const FindBar = styled.div`
  position: absolute;
  top: 248px;
  left: 1427px;
  display: flex;
  align-items: center;
  width: 467px;
  height: 48px;
  padding-left: 15px;
  background: #f3f3f3;
  border-radius: 7px;
  box-shadow: 0 1px 4px rgba(0, 0, 0, 0.45);
`;

const FindInput = styled.div`
  display: flex;
  align-items: center;
  width: 286px;
  height: 33px;
  margin-left: 13px;
  padding: 0 6px 0 3px;
  background: #fff;
  border: 1px solid #ababab;
  border-radius: 4px;
  font-size: 16.500px;
`;

const FindQuery = styled.span`
  flex: 1;
`;

const FindCount = styled.span`
  color: #6f7f8f;
  margin-right: 5px;
`;

const FindNav = styled.span`
  display: flex;
  justify-content: center;
  flex: none;
  width: ${(p) => p.$w}px;
`;

const Toast = styled.aside`
  position: absolute;
  top: 732px;
  left: 1365px;
  width: 540px;
  height: 246px;
  padding: 18px 24px 0;
  background: #464890;
  border-radius: 10px;
  color: #fff;
`;

const ToastHead = styled.div`
  display: flex;
  align-items: center;
  height: 32px;
  padding-right: 5px;
  font-size: 17px;
`;

const ToastApp = styled.span`
  flex: 1;
  margin-left: 15px;
`;

const ToastBody = styled.div`
  display: flex;
  align-items: flex-start;
  margin-top: 16px;
`;

const Avatar = styled.div`
  display: flex;
  align-items: center;
  justify-content: center;
  flex: none;
  width: 72px;
  height: 72px;
  border-radius: 50%;
  background: #fdf0cd;
  color: #7a5c14;
  font-size: 31px;
`;

const ToastText = styled.div`
  margin-left: 18px;
  padding-top: 1px;
  font-size: 19.900px;
  line-height: 30px;
  white-space: nowrap;
`;

const ToastName = styled.div`
  font-size: 19px;
  font-weight: 700;
`;

const ReplyBox = styled.div`
  display: flex;
  align-items: center;
  justify-content: space-between;
  height: 48px;
  margin-top: 30px;
  padding: 0 16px 0 19px;
  background: #3a3a68;
  border-radius: 5px;
  font-size: 19.700px;
`;

/* the PDF page itself */

const PageSvg = styled.svg`
  display: block;
  width: 1862px;
  height: 822px;
  font-family: "Liberation Sans", Arial, sans-serif;
  font-kerning: none;
`;

const ADV = { M: 0.833, V: 0.667, "-": 0.333, A: 0.667, B: 0.667, L: 0.556, H: 0.722 };
const SIZE = 198;

// the drawing's "1" has no foot, Liberation's has, so that glyph comes from Roboto
const Lettering = ({ text, at, turned }) => {
  let x = 0;
  const spans = [...text].map((ch, i) => {
    const span =
      ch === "1" ? (
        <tspan key={i} x={x + 2} fontFamily="Roboto, sans-serif" fontSize="190">1</tspan>
      ) : (
        <tspan key={i} x={x}>{ch}</tspan>
      );
    x += (ADV[ch] || 0.556) * SIZE;
    return span;
  });
  const turn = turned ? " rotate(-90)" : "";
  return (
    <text transform={`translate(${at})${turn} scale(1 1.043)`} fontSize={SIZE} stroke="#000" strokeWidth="1.600">
      {spans}
    </text>
  );
};

const DrawingPage = () => (
  <PageSvg viewBox="35 247 1862 822">
    {/* left symbol */}
    <circle cx="-8" cy="707.500" r="340" fill="none" stroke="#000" strokeWidth="22" />
    <rect x="10" y="367" width="322" height="681" rx="3" fill="none" stroke="#000" strokeWidth="22" />
    <rect x="0" y="697" width="343" height="21" />
    <rect x="34" y="790" width="260" height="169" fill="#fff" />
    <Lettering text="AL" at="-66 621" />
    <Lettering text="1B" at="41 938" />

    {/* top valve */}
    <rect x="827" y="247" width="22" height="42" />
    <rect x="1081" y="247" width="22" height="42" />
    <path d="M875 247h22v140h136.500V247H1055V397.500H1044V408H886V397.500H875z" />
    <path d="M936 247H991L977 342V387H955V342z" />

    {/* right rail */}
    <rect x="1610" y="247" width="44" height="823" />
    <rect x="1686" y="247" width="21" height="823" />
    <rect x="1689" y="247" width="208" height="14" />
    <Lettering text="0129" at="1908 762" turned />
    <Lettering text="H" at="1908 1099" turned />

    {/* tag boxes */}
    <path d="M422 760.600V479.500H1498.500V772" fill="none" stroke="#000" strokeWidth="22" strokeLinejoin="round" />
    <rect x="422" y="750.500" width="1087" height="21.500" />
    <rect x="491" y="592" width="949" height="132" rx="2" fill="#80eaff" stroke="#00a5e0" strokeWidth="3" />
    <Lettering text="MV-0101A" at="493 691.500" />

    <path d="M416 1085V893.500H1482V1085" fill="none" stroke="#000" strokeWidth="22" strokeLinejoin="round" />
    <Lettering text="MV-0101B" at="487 1105.500" />
  </PageSvg>
);

const MENU = [
  ["View", 64],
  ["Comment", 110],
  ["Protect", 80],
  ["Form", 74],
  ["Organize", 94],
  ["Convert", 90],
  ["Share", 78],
  ["Review", 76],
  ["Accessibility", 129],
  ["Bookmarks", 110],
  ["Help", 73],
];

const SIDE_TOP = [
  <Bookmark key="b" w={15} h={21} />,
  <Pages key="p" />,
  <Note key="n" />,
  <Clip key="c" />,
  <DocList key="dl" />,
  <DocSeal key="ds" />,
  <Layers key="l" />,
  <DocShapes key="sh" />,
  <Pins key="pi" />,
  <Tree key="t" />,
  <LinkSmall key="li" />,
];

const SIDE_BOTTOM = [
  <Tag key="tg" />,
  <Zigzag key="z" />,
  <Access key="a" />,
  <ListAccess key="la" />,
];

export default function App() {
  return (
    <Root>
      <GlobalStyle />
      <Header>
        <TitleRow>
          <AppLogo />
          <QatSep $ml={8} />
          <Spot $ml={5}><Folder /></Spot>
          <Spot $ml={7}><Chev s={8} /></Spot>
          <Spot $ml={12}><Save /></Spot>
          <Spot $ml={16}><Printer /></Spot>
          <Spot $ml={11}><Mail /></Spot>
          <Spot $ml={6}><Chev s={8} /></Spot>
          <Spot $ml={7}><Scanner /></Spot>
          <Spot $ml={6}><Chev s={8} /></Spot>
          <QatSep $ml={6} />
          <Spot $ml={7}><UndoIcon /></Spot>
          <Spot $ml={9}><Chev s={8} c="#aaa" /></Spot>
          <Spot $ml={9}><UndoIcon flip /></Spot>
          <Spot $ml={8}><Chev s={8} c="#aaa" /></Spot>
          <QatSep $ml={6} />
          <Spot $ml={10}><NavArrow /></Spot>
          <Spot $ml={15}><NavArrow dir="right" c="#b6cf9c" ring="#bbb" /></Spot>
          <WindowTitle>131241-WSB01-DR-P-6020 - PDF-XChange Editor</WindowTitle>
        </TitleRow>
        <ContextTab>
          <ContextName>Hand Tool</ContextName>
          <ContextLabel>Format</ContextLabel>
        </ContextTab>
        <QuickRow>
          <QuickLaunch>
            <Ico w={20} h={22}>
              <circle cx="8" cy="9" r="6" fill="none" stroke="#555" strokeWidth="1.800" />
              <path d="M12 14l6 6" stroke="#555" strokeWidth="2.200" />
            </Ico>
            Quick Launch (Ctrl+.)
          </QuickLaunch>
          <QatSep $ml={5} />
          <Spot $ml={5}><GearBadge /></Spot>
          <Spot $ml={6}><Chev s={8} /></Spot>
          <QatSep $ml={5} />
          <Spot $ml={10}><FullScreen /></Spot>
          <QatSep $ml={9} />
          <Minimize />
          <Spot $ml={46}>
            <Ico w={16} h={17}>
              <path d="M4 4V1h11v11h-3" fill="none" stroke="#333" />
              <rect x=".5" y="4.500" width="11.500" height="12" fill="none" stroke="#333" />
            </Ico>
          </Spot>
          <Spot $ml={46}><Cross s={14} /></Spot>
        </QuickRow>
        <TabsRow>
          <FileTab>File</FileTab>
          <MenuTab $w={77} $on>Home</MenuTab>
          {MENU.map(([name, w]) => (
            <MenuTab key={name} $w={w}>{name}</MenuTab>
          ))}
        </TabsRow>
        <FindRow>
          <FindBtn $w={82} $mr={2} $on><FindDoc />Find...</FindBtn>
          <FindBtn $w={95}><FolderBino />Search...</FindBtn>
          <Spot $ml={16}><Chev s={12} up c="#222" sw={2} /></Spot>
        </FindRow>
      </Header>

      <Ribbon>
        <Group $w={335}>
          <GroupBody $pl={1}>
            <BigBtn $w={54} $on>
              <BigIcon><HandIcon /></BigIcon>
              Hand
            </BigBtn>
            <BigBtn $w={55}>
              <BigIcon><SelectText /></BigIcon>
              <BigLabel>Select<br />Text</BigLabel>
            </BigBtn>
            <BigBtn $w={90}>
              <BigIcon><SelectComments /></BigIcon>
              <BigLabel>Select<br />Comments</BigLabel>
            </BigBtn>
            <SmallCol $w={130} $ml={5}>
              <SmallBtn><SmallIcon><Camera /></SmallIcon>Snapshot<SideChev><Chev s={8} /></SideChev></SmallBtn>
              <SmallBtn><SmallIcon><Clipboard /></SmallIcon>Clipboard<SideChev><Chev s={8} /></SideChev></SmallBtn>
              <SmallBtn><SmallIcon><FindDoc /></SmallIcon>Find<SideChev><Chev s={8} /></SideChev></SmallBtn>
            </SmallCol>
          </GroupBody>
          <GroupLabel>Tools</GroupLabel>
        </Group>

        <Group $w={199}>
          <GroupBody>
            <ViewRows>
              <ViewRow $pl={5}>
                <PlusMinus />
                <ZoomCombo $w={124} $ml={7} $mr={6}>1000%<Chev s={10} /></ZoomCombo>
                <PlusMinus plus />
              </ViewRow>
              <ViewRow>
                <ViewCell><Doc11 /></ViewCell>
                <ViewCell><DocFit /></ViewCell>
                <ViewCell><DocWidth /></ViewCell>
                <ViewCell><DocVisible /></ViewCell>
                <ViewSep $ml={4} />
                <ViewCell $w={32}><Rotate /></ViewCell>
                <ViewCell $w={32}><Rotate flip /></ViewCell>
              </ViewRow>
              <ViewRow>
                <ViewCell><Bookmark /></ViewCell>
                <ViewCell><Pages /></ViewCell>
                <ViewCell><Note /></ViewCell>
                <ViewCell><Clip /></ViewCell>
                <ViewCell><DocShapes /></ViewCell>
                <ViewSep $ml={3} />
                <ViewCell $w={37}><DocListGear /></ViewCell>
              </ViewRow>
            </ViewRows>
          </GroupBody>
          <GroupLabel>View</GroupLabel>
        </Group>

        <Group $w={272}>
          <GroupBody $pl={4}>
            <BigBtn $w={54}>
              <BigIcon><EditText /></BigIcon>
              <BigLabel>Edit<br />Text</BigLabel>
            </BigBtn>
            <BigBtn $w={76}>
              <BigIcon><EditObjects /></BigIcon>
              <BigLabel>Edit<br />Objects<InlineChev><Chev s={8} /></InlineChev></BigLabel>
            </BigBtn>
            <BigBtn $w={60}>
              <BigIcon><AddIcon /></BigIcon>
              Add
              <BigChev><Chev s={8} /></BigChev>
            </BigBtn>
            <BigBtn $w={70}>
              <BigIcon><SelectionIcon /></BigIcon>
              Selection
              <BigChev><Chev s={8} /></BigChev>
            </BigBtn>
          </GroupBody>
          <GroupLabel>Objects</GroupLabel>
        </Group>

        <Group $w={347}>
          <GroupBody $pl={8}>
            <SmallCol $w={147}>
              <SmallBtn><SmallIcon $w={22} $gap={5}><Typewriter /></SmallIcon>Typewriter<Tri /></SmallBtn>
              <SmallBtn><SmallIcon $w={22} $gap={5}><HighlightT /></SmallIcon>Highlight Text<Tri /></SmallBtn>
              <SmallBtn><SmallIcon $w={22} $gap={5}><UnderlineT /></SmallIcon>Underline<Tri /></SmallBtn>
            </SmallCol>
            <SmallCol $w={128}>
              <SmallBtn><SmallIcon $w={22} $gap={6}><Sticky /></SmallIcon>Sticky Note<Tri /></SmallBtn>
              <SmallBtn><SmallIcon $w={22} $gap={6}><RedArrow /></SmallIcon>Arrow<Tri /></SmallBtn>
              <SmallBtn><SmallIcon $w={22} $gap={6}><GreenRect /></SmallIcon>Rectangle<Tri /></SmallBtn>
            </SmallCol>
            <RibbonSep />
            <BigBtn $w={60}>
              <BigIcon><StampIcon /></BigIcon>
              Stamp
              <BigChev><Chev s={8} /></BigChev>
            </BigBtn>
          </GroupBody>
          <GroupLabel>Comment</GroupLabel>
        </Group>

        <Group $w={298}>
          <GroupBody>
            <BigBtn $w={84}>
              <BigIcon><LinkPencil /></BigIcon>
              <BigLabel>Add/Edit<br />Links</BigLabel>
            </BigBtn>
            <SmallCol $w={210}>
              <SmallBtn><SmallIcon $w={24} $gap={4}><Globe badge="plus" /></SmallIcon>Add Links to URLs</SmallBtn>
              <SmallBtn><SmallIcon $w={24} $gap={4}><Globe badge="minus" /></SmallIcon>Remove All Web-Links</SmallBtn>
              <SmallBtn><SmallIcon $w={24} $gap={4}><QrLink /></SmallIcon>Add Links to Barcodes</SmallBtn>
            </SmallCol>
          </GroupBody>
          <GroupLabel>Links</GroupLabel>
        </Group>

        <Group $w={97}>
          <GroupBody>
            <BigBtn $w={96}>
              <BigIcon><SignDoc /></BigIcon>
              <BigLabel>Sign<br />Document</BigLabel>
            </BigBtn>
          </GroupBody>
          <GroupLabel>Protect</GroupLabel>
        </Group>
      </Ribbon>

      <TabStrip>
        <DocTab>
          131241-WSB01-DR-P-6020
          <DocTabClose><Cross s={11} /></DocTabClose>
        </DocTab>
        <StripBtn $w={35} $ml={2}>
          <Ico w={20}>
            <path d="M10 1v18M1 10h18" stroke="#333" />
          </Ico>
        </StripBtn>
        <Spacer />
        <StripBtn $w={38} $mr={1}><Cross s={18} /></StripBtn>
      </TabStrip>
      <StripShade />

      <Workspace>
        <SideBar>
          <SideTop><Collapse /></SideTop>
          <SideGrip $w={28} $h={13} />
          {SIDE_TOP.map((icon) => (
            <SideItem key={icon.key}>{icon}</SideItem>
          ))}
          <SideSep />
          {SIDE_BOTTOM.map((icon) => (
            <SideItem key={icon.key}>{icon}</SideItem>
          ))}
        </SideBar>

        <CenterCol>
          <ViewerRow>
            <PageCanvas>
              <DrawingPage />
            </PageCanvas>
            <VScroll>
              <Chev s={13} up c="#777" />
              <VMark />
              <VThumb />
              <Chev s={13} c="#777" />
            </VScroll>
          </ViewerRow>
          <HScroll>
            <Ico w={8} h={14}>
              <path d="M7 1L1 7l6 6" fill="none" stroke="#666" strokeWidth="1.200" />
            </Ico>
            <HThumbTrack><HThumb /></HThumbTrack>
            <Ico w={8} h={14}>
              <path d="M1 1l6 6-6 6" fill="none" stroke="#666" strokeWidth="1.200" />
            </Ico>
          </HScroll>
          <StatusBar>
            <GripCol><Grip $h={20} /><Collapse /></GripCol>
            <Spot $ml={4}><GearOrange /></Spot>
            <Options>Options...</Options>
            <Spot $ml={0}><Chev s={8} /></Spot>
            <StatusSep $ml={5} />
            <Spot $ml={7}><SizeIcon /></Spot>
            <Metric $w={84} $ml={4}>{"W : 2383.94 pt\nH : 1683.78 pt"}</Metric>
            <StatusSep />
            <Spot $ml={6}><CrossPointer /></Spot>
            <Metric $w={20} $ml={5}>{"X :\nY :"}</Metric>
            <GripCol $ml={452}><Grip $w={12} $h={20} /><Collapse /></GripCol>
            <Spot $ml={5}><NavArrow s={22} ring="#bbb" c="#8fc4f2" /></Spot>
            <Spot $ml={9}>
              <CircleBtn s={22} c="#bbb">
                <path d="M13 6l-5 5 5 5" fill="none" stroke="#8fc4f2" strokeWidth="2" />
              </CircleBtn>
            </Spot>
            <PageInput>1 / 1</PageInput>
            <Spot $ml={7}>
              <CircleBtn s={22} c="#bbb">
                <path d="M9 6l5 5-5 5" fill="none" stroke="#8fc4f2" strokeWidth="2" />
              </CircleBtn>
            </Spot>
            <Spot $ml={9}><NavArrow s={22} dir="right" ring="#bbb" c="#8fc4f2" /></Spot>
            <StatusSep $ml={8} />
            <Spot $ml={6}><NavArrow s={22} /></Spot>
            <Spot $ml={9}><NavArrow s={22} dir="right" ring="#bbb" c="#b6cf9c" /></Spot>
            <GripCol $ml={234}><Grip $w={12} $h={20} /><Collapse /></GripCol>
            <Spot $ml={5}><SinglePage /></Spot>
            <LayoutBtn $ml={6} $on><ContinuousPage /></LayoutBtn>
            <Spot $ml={8}><FacingPages /></Spot>
            <Spot $ml={7}><CoverPages /></Spot>
            <GripCol $ml={9}><Grip $w={12} $h={20} /><Collapse /></GripCol>
            <ZoomCombo $w={91} $h={28} $ml={1}>1000%<Chev s={10} /></ZoomCombo>
            <StatusSep $ml={6} />
            <Spot $ml={5}><PlusMinus s={22} /></Spot>
            <SliderTrack>
              <SliderFill />
              <SliderTick />
              <SliderKnob />
            </SliderTrack>
            <Spot $ml={7}><PlusMinus plus s={22} /></Spot>
            <GripCol $ml={8}><Grip $w={12} $h={20} /><Collapse /></GripCol>
            <Spot $ml={6}><AcrobatBadge /></Spot>
            <Spot $ml={11}><Chev s={8} /></Spot>
            <EdgeMark $ml={10}><Chev s={9} /></EdgeMark>
          </StatusBar>
        </CenterCol>
      </Workspace>

      <FindBar>
        <Chev s={11} />
        <FindInput>
          <FindQuery>MV0101A</FindQuery>
          <FindCount>1/1</FindCount>
          <Cross s={15} c="#e0524f" />
          <Spot $ml={12}><Chev s={11} /></Spot>
        </FindInput>
        <FindNav $w={35}>
          <Ico w={9} h={15}><path d="M8 1L1 7.500l7 6.500" fill="none" stroke="#333" strokeWidth="1.400" /></Ico>
        </FindNav>
        <FindNav $w={30}>
          <Ico w={9} h={15}><path d="M1 1l7 6.500-7 6.500" fill="none" stroke="#333" strokeWidth="1.400" /></Ico>
        </FindNav>
        <FindNav $w={37}>
          <Ico w={5} h={18}>
            <circle cx="2.500" cy="3" r="2" fill="#333" />
            <circle cx="2.500" cy="9" r="2" fill="#333" />
            <circle cx="2.500" cy="15" r="2" fill="#333" />
          </Ico>
        </FindNav>
        <FindNav $w={32}><Cross s={11} sw={1.500} /></FindNav>
      </FindBar>

      <Toast>
        <ToastHead>
          <TeamsLogo />
          <ToastApp>Microsoft Teams</ToastApp>
          <Ico w={16} h={4}>
            <circle cx="2" cy="2" r="1.400" fill="#fff" />
            <circle cx="8" cy="2" r="1.400" fill="#fff" />
            <circle cx="14" cy="2" r="1.400" fill="#fff" />
          </Ico>
          <Spot $ml={29}><EmojiPlus /></Spot>
          <Spot $ml={29}><Cross s={15} c="#fff" /></Spot>
        </ToastHead>
        <ToastBody>
          <Avatar>VO</Avatar>
          <ToastText>
            <ToastName>Oh, Vanessa</ToastName>
            just to confirm you last day is 15 Aug?
          </ToastText>
        </ToastBody>
        <ReplyBox>
          Send a quick reply
          <SendIcon />
        </ReplyBox>
      </Toast>
    </Root>
  );
}
